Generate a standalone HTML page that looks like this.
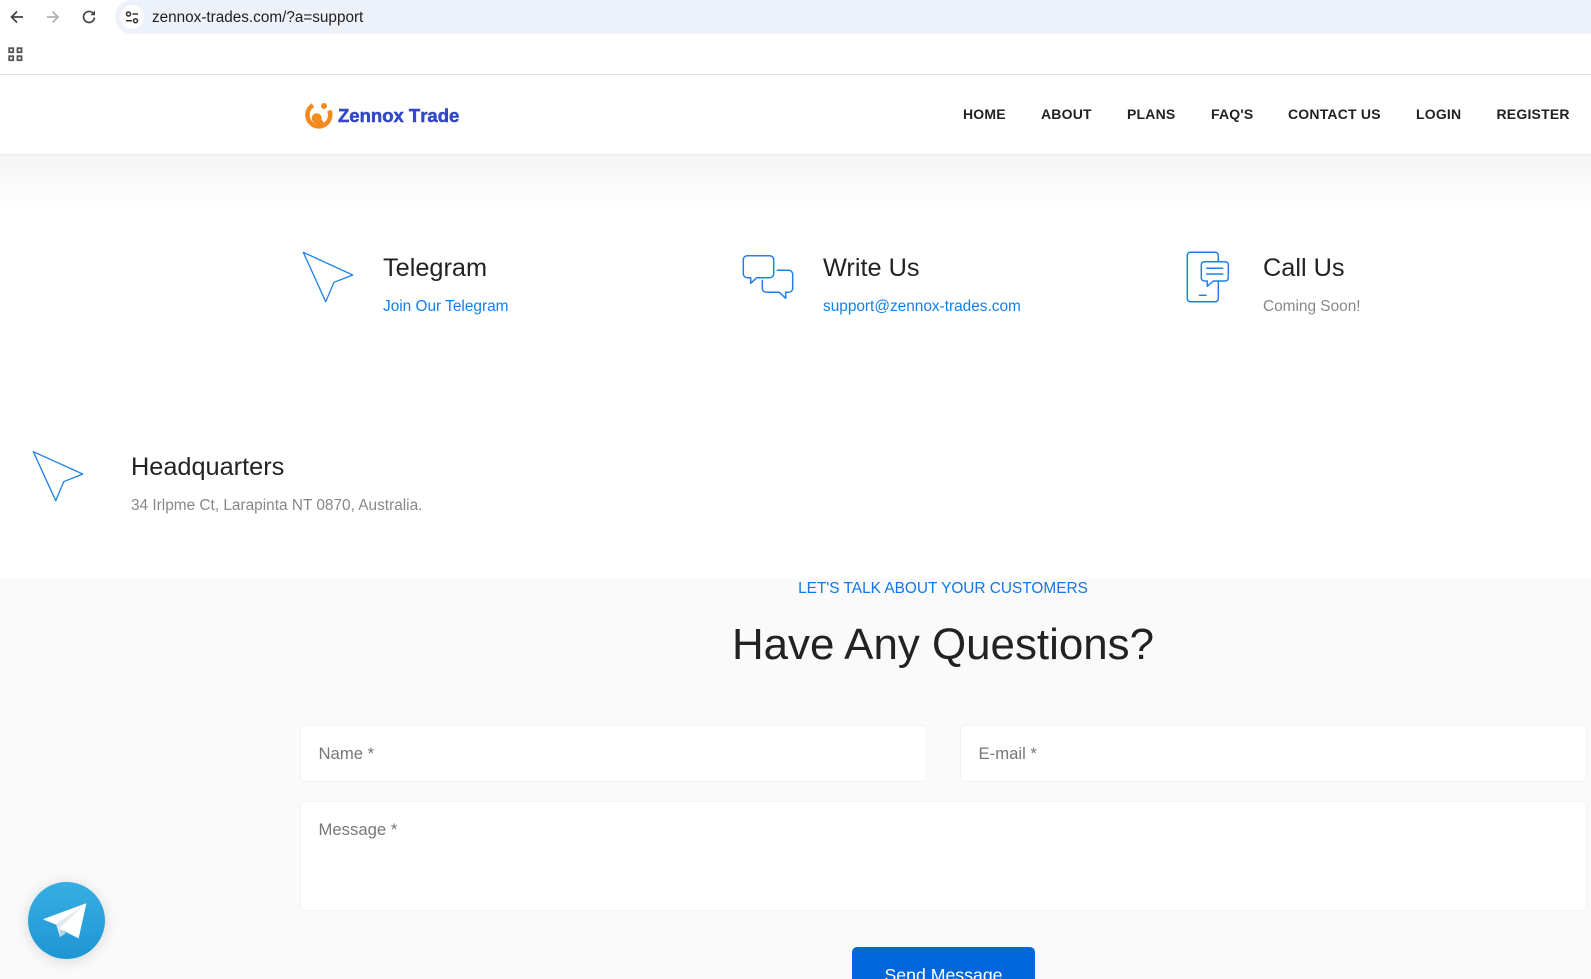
<!DOCTYPE html>
<html lang="en">
<head>
<meta charset="utf-8">
<title>Zennox Trade - Support</title>
<style>
html,body{margin:0;padding:0;width:1591px;height:979px;overflow:hidden;background:#fff;font-family:"Liberation Sans",Arial,sans-serif}
.a{position:absolute;white-space:nowrap}
#wrap{position:relative;width:1591px;height:979px;overflow:hidden}
.nav{top:104px;font-size:14px;line-height:20px;font-weight:700;color:#222;letter-spacing:.2px}
.h{font-size:25.300px;line-height:30px;color:#222}
.s{font-size:15.400px;line-height:20px}
.blue{color:#1180ee}
.gray{color:#888}
.box{position:absolute;background:#fff;border:1px solid #f3f3f3;border-radius:5px;box-sizing:border-box}
.ph{font-size:16.700px;line-height:20px;color:#777}
svg{position:absolute;overflow:visible}
</style>
</head>
<body>
<div id="wrap">
  <div class="a" style="left:115px;top:0;width:1476px;height:34px;background:#edf2fa;border-radius:17px 0 0 17px"></div>
  <div class="a" style="left:120px;top:5px;width:24px;height:24px;background:#fff;border-radius:50%"></div>

  <svg style="left:0;top:0" width="160" height="70" viewBox="0 0 160 70" fill="none">
    <path d="M23 17H12M17 11.500L11.500 17L17 22.500" stroke="#444" stroke-width="1.700"/>
    <path d="M47 17H58M52.500 11.500L58 17L52.500 22.500" stroke="#b0b0b0" stroke-width="1.700"/>
    <path d="M93.300 13.500A5.500 5.500 0 1 0 94.500 17.500" stroke="#474747" stroke-width="1.700"/>
    <path d="M95 10.500V15.200H90.300Z" fill="#474747"/>
    <circle cx="128.500" cy="14" r="2" stroke="#333" stroke-width="1.500"/>
    <path d="M132.500 14H138M126 20.700H132" stroke="#333" stroke-width="1.500"/>
    <circle cx="135.500" cy="20.700" r="2" stroke="#333" stroke-width="1.500"/>
    <g stroke="#555" stroke-width="1.800">
      <rect x="9.200" y="48.200" width="4" height="4"/>
      <rect x="17.500" y="48.200" width="4" height="4"/>
      <rect x="9.200" y="56.200" width="4" height="4"/>
      <rect x="17.500" y="56.200" width="4" height="4"/>
    </g>
  </svg>
  <div class="a" style="left:152px;top:7.500px;font-size:15.300px;line-height:20px;color:#202124">zennox-trades.com/?a=support</div>

  <div class="a" style="left:0;top:74px;width:1591px;height:1px;background:#e2e2e2"></div>
  <div class="a" style="left:0;top:154px;width:1591px;height:1px;background:#ececec"></div>
  <div class="a" style="left:0;top:155px;width:1591px;height:55px;background:linear-gradient(#f5f5f5,#fff)"></div>

  <svg style="left:305px;top:101px" width="29" height="29" viewBox="0 0 29 29" fill="none">
    <path d="M8 4.200A11.400 11.400 0 1 0 24.300 9.500" stroke="#f48a1f" stroke-width="4.500"/>
    <circle cx="19" cy="5" r="3" fill="#f48a1f"/>
    <circle cx="11.700" cy="17.300" r="5" fill="#f48a1f"/>
    <path d="M12 18L16 24" stroke="#f48a1f" stroke-width="7"/>
  </svg>
  <div class="a" style="left:338px;top:104px;font-size:18.500px;line-height:24px;font-weight:700;color:#3348c6;font-kerning:none;-webkit-text-stroke:.5px #3348c6">Zennox Trade</div>

  <div class="a nav" style="left:963px">HOME</div>
  <div class="a nav" style="left:1041px">ABOUT</div>
  <div class="a nav" style="left:1127px">PLANS</div>
  <div class="a nav" style="left:1211px">FAQ'S</div>
  <div class="a nav" style="left:1288px">CONTACT US</div>
  <div class="a nav" style="left:1416px">LOGIN</div>
  <div class="a nav" style="left:1496.500px">REGISTER</div>

  <svg style="left:0;top:0" width="1591" height="520" viewBox="0 0 1591 520" fill="none" stroke="#1f80e8" stroke-width="1.300" stroke-linejoin="round" stroke-linecap="round">
    <path d="M303.300 252.300L352.700 275L334 282.300L325.700 301.700Z"/>
    <path d="M33.300 451.700L82.700 474L63.700 481.700L55.700 500.700Z"/>
    <g stroke-width="1.500">
    <path d="M747.300 255.700H769.700A4 4 0 0 1 773.700 259.700V273.700A4 4 0 0 1 769.700 277.700H756.700L750.700 283.300V277.700H747.300A4 4 0 0 1 743.300 273.700V259.700A4 4 0 0 1 747.300 255.700Z"/>
    <path d="M777.300 270.300H788.700A4 4 0 0 1 792.700 274.300V288.300A4 4 0 0 1 788.700 292.300H785.700V298.300L779.300 292.300H766.300A4 4 0 0 1 762.300 288.300V280.300"/>
    <path d="M1218.300 261.700V255.300A3 3 0 0 0 1215.300 252.300H1190.300A3 3 0 0 0 1187.300 255.300V298.700A3 3 0 0 0 1190.300 301.700H1215.300A3 3 0 0 0 1218.300 298.700V281.500"/>
    <path d="M1204.300 261.700H1225.300A3 3 0 0 1 1228.300 264.700V278A3 3 0 0 1 1225.300 281H1213.300L1207.300 286.300V281H1204.300A3 3 0 0 1 1201.300 278V264.700A3 3 0 0 1 1204.300 261.700Z"/>
    <path d="M1206.700 268.300H1222.700M1206.700 274H1222.700M1199.500 295.300H1206"/>
    </g>
  </svg>

  <div class="a h" style="left:383px;top:253px">Telegram</div>
  <div class="a s blue" style="left:383px;top:297px">Join Our Telegram</div>
  <div class="a h" style="left:823px;top:253px">Write Us</div>
  <div class="a s blue" style="left:823px;top:297px">support@zennox-trades.com</div>
  <div class="a h" style="left:1263px;top:253px">Call Us</div>
  <div class="a s gray" style="left:1263px;top:297px">Coming Soon!</div>
  <div class="a h" style="left:131px;top:452px">Headquarters</div>
  <div class="a s gray" style="left:131px;top:496px">34 Irlpme Ct, Larapinta NT 0870, Australia.</div>

  <div class="a" style="left:0;top:579px;width:1591px;height:400px;background:#fafafa"></div>
  <div class="a" style="left:793px;top:579px;font-size:15.400px;line-height:20px;color:#1178e6;width:300px;text-align:center">LET'S TALK ABOUT YOUR CUSTOMERS</div>
  <div class="a" style="left:643px;top:615px;width:600px;text-align:center;font-size:43.900px;line-height:60px;color:#222">Have Any Questions?</div>

  <div class="box" style="left:300px;top:725px;width:627px;height:57px"></div>
  <div class="box" style="left:960px;top:725px;width:627px;height:57px"></div>
  <div class="box" style="left:300px;top:801px;width:1287px;height:110px"></div>
  <div class="a ph" style="left:318.500px;top:744px">Name *</div>
  <div class="a ph" style="left:978.500px;top:744px">E-mail *</div>
  <div class="a ph" style="left:318.500px;top:820px">Message *</div>

  <div class="a" style="left:852px;top:947px;width:183px;height:60px;background:#0067da;border-radius:5px;color:#fff;font-size:17.700px;line-height:56px;text-align:center">Send Message</div>

  <div class="a" style="left:28px;top:882px;width:77px;height:77px;border-radius:50%;background:linear-gradient(#37aee2,#1e96d4);box-shadow:0 2px 14px rgba(0,0,0,.14)"></div>
  <svg style="left:0;top:860px" width="160" height="119" viewBox="0 0 160 119" stroke-linejoin="round">
    <path d="M44 59.300L85.700 44L56 64Z" fill="#fff" stroke="#fff" stroke-width="1"/>
    <path d="M56 64L85.700 44L60 68.500V77.300Z" fill="#dfeaf3"/>
    <path d="M60 77.300V68.500L66 73Z" fill="#bcd4e5"/>
    <path d="M60 68.500L85.700 44L78.300 77.700Z" fill="#fff" stroke="#fff" stroke-width="1"/>
  </svg>
</div>
</body>
</html>
